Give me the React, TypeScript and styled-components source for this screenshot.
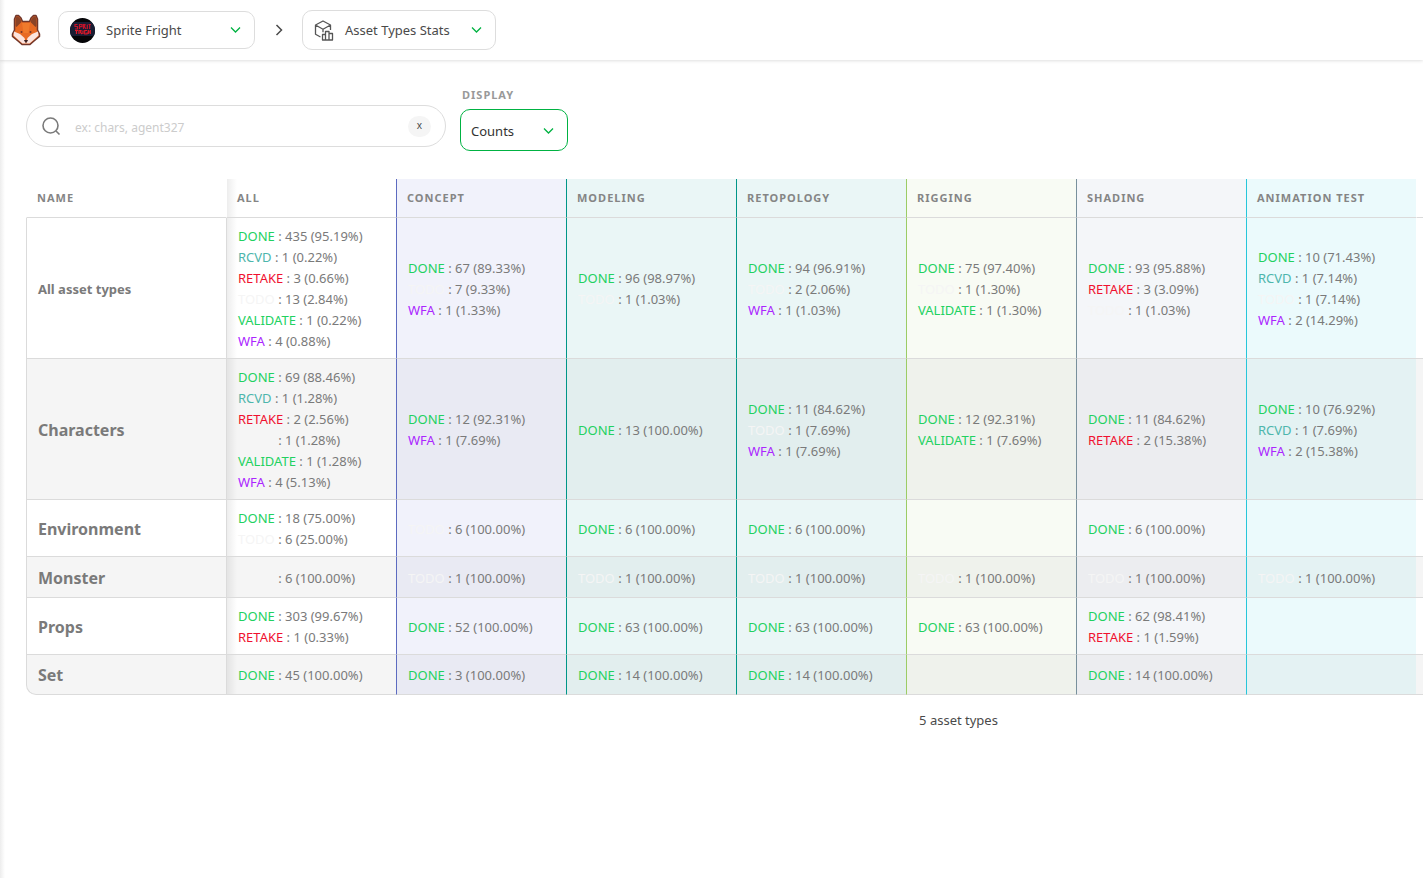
import React, { useId } from 'react';
import styled, { createGlobalStyle, css } from 'styled-components';

const GlobalStyle = createGlobalStyle`
  *, *::before, *::after { box-sizing: border-box; }
  body {
    margin: 0;
    background: #fff;
    color: #4a4a4a;
    font-family: 'Noto Sans', 'Open Sans', sans-serif;
    font-size: 13px;
  }
  button, input, select { font: inherit; color: inherit; }
`;

const Page = styled.div`
  min-height: 100vh;
  overflow: hidden;
  background: linear-gradient(to right, #ededed, #fff 5px);
`;

const TopBar = styled.header`
  display: flex;
  align-items: center;
  height: 60px;
  padding-left: 11px;
  box-shadow: 0 0 4px rgba(0, 0, 0, 0.2);
`;

const HomeLink = styled.a`
  display: flex;
  margin-right: 17px;
`;

const NavSelect = styled.button<{ $width: number; $height: number }>`
  display: flex;
  align-items: center;
  width: ${(p) => p.$width}px;
  height: ${(p) => p.$height}px;
  padding: 0 13px 0 11px;
  border: 1px solid #ddd;
  border-radius: 10px;
  background: #fff;
  cursor: pointer;
`;

const NavLabel = styled.span`
  flex: 1;
  margin-left: 11px;
  text-align: left;
  line-height: 20px;
`;

const NavIcon = styled.span`
  display: flex;
  flex: none;
`;

const Separator = styled.span`
  display: flex;
  justify-content: center;
  width: 47px;
`;

const Main = styled.main`
  padding: 25px 0 0 26px;
`;

const Filters = styled.form`
  display: flex;
  align-items: flex-end;
  gap: 14px;
  margin-bottom: 28px;
`;

const SearchBox = styled.div`
  display: flex;
  align-items: center;
  width: 420px;
  height: 42px;
  margin-bottom: 4px;
  padding: 0 14px;
  border: 1px solid #ddd;
  border-radius: 21px;
`;

const SearchInput = styled.input`
  flex: 1;
  min-width: 0;
  margin-left: 14px;
  padding: 3px 0 0;
  border: 0;
  outline: 0;
  background: none;
  font-size: 12px;
  &::placeholder { color: #ccc; opacity: 1; }
`;

const ClearButton = styled.button`
  width: 23px;
  height: 21px;
  padding: 0 0 2px;
  border: 0;
  border-radius: 11px;
  background: #f5f5f5;
  font-size: 10px;
  line-height: 18px;
`;

const Field = styled.div`
  display: flex;
  flex-direction: column;
`;

const FieldLabel = styled.label`
  padding: 0 0 5px 2px;
  color: #999;
  font-size: 11px;
  font-weight: 700;
  letter-spacing: 1px;
  line-height: 19px;
  text-transform: uppercase;
`;

const SelectFrame = styled.div`
  display: grid;
  align-items: center;
  width: 108px;
  height: 42px;
  & > * { grid-area: 1 / 1; }
  & > svg { justify-self: end; margin: 2px 14px 0 0; pointer-events: none; }
`;

const Select = styled.select`
  width: 100%;
  height: 100%;
  padding: 2px 10px 0;
  border: 1px solid #00b242;
  border-radius: 10px;
  background: #fff;
  color: #333;
  appearance: none;
`;

const TableScroller = styled.div`
  overflow-x: auto;
  scrollbar-width: none;
`;

const TableContent = styled.div`
  min-width: 1865px;
`;

const StatsTable = styled.table`
  width: 100%;
  border-collapse: separate;
  border-spacing: 0;
  table-layout: fixed;
  color: #7a7a7a;
`;

const edgeShadow = css`
  background-image: linear-gradient(to right, rgba(0, 0, 0, 0.07), rgba(0, 0, 0, 0) 10px);
  background-repeat: no-repeat;
`;

const NameCol = styled.col` width: 200px; `;
const StatCol = styled.col` width: 170px; `;

const HeadCell = styled.th<{ $bg?: string; $line?: string; $edge?: boolean }>`
  height: 39px;
  padding: 0 10px 2px;
  border-left: 1px solid ${(p) => p.$line ?? 'transparent'};
  border-bottom: 1px solid #dbdbdb;
  background-color: ${(p) => p.$bg ?? 'transparent'};
  color: #858585;
  font-size: 11px;
  font-weight: 700;
  letter-spacing: 1px;
  text-align: left;
  text-transform: uppercase;
  white-space: nowrap;
  ${(p) => p.$edge && edgeShadow}
`;

const Row = styled.tr`
  & > * { border-bottom: 1px solid #dbdbdb; }
  &:nth-child(even) { background: #f5f5f5; }
  &:last-child > th { border-bottom-left-radius: 10px; }
  &:last-child { background: none; }
  &:last-child > * { background-color: #f5f5f5; }
`;

const NameCell = styled.th<{ $total?: boolean }>`
  padding: 8px 11px 6px;
  border-left: 1px solid #dbdbdb;
  font-size: ${(p) => (p.$total ? 13 : 16)}px;
  font-weight: 700;
  line-height: ${(p) => (p.$total ? 21 : 26)}px;
  text-align: left;
  ${Row}:last-child > & { line-height: 25px; }
`;

const StatCell = styled.td<{ $bg?: string; $stripe?: string; $line?: string; $edge?: boolean }>`
  padding: 8px 11px 6px;
  border-left: 1px solid ${(p) => p.$line ?? '#dbdbdb'};
  line-height: 21px;
  white-space: nowrap;
  && { background-color: ${(p) => p.$bg ?? 'transparent'}; }
  ${Row}:nth-child(even) > && { background-color: ${(p) => p.$stripe ?? '#f5f5f5'}; }
  ${(p) => p.$edge && edgeShadow}
`;

const FillCell = styled.td``;

const Status = styled.span<{ $color: string }>`
  color: ${(p) => p.$color};
`;

const Footer = styled.p`
  margin: 15px 0 0;
  text-align: center;
  line-height: 20px;
`;

const STATUS_COLORS: Record<string, string> = {
  DONE: '#22d160',
  RCVD: '#4db6ac',
  RETAKE: '#f01030',
  TODO: '#f5f5f5',
  VALIDATE: '#22d160',
  WFA: '#ab26ff',
};

type Column = { name: string; line?: string; bg?: string; stripe?: string };

const COLUMNS: Column[] = [
  { name: 'All' },
  { name: 'Concept', line: '#5c6bc0', bg: '#f1f2fb', stripe: '#e9eaf3' },
  { name: 'Modeling', line: '#009688', bg: '#eaf6f6', stripe: '#e2eeee' },
  { name: 'Retopology', line: '#009688', bg: '#eaf6f6', stripe: '#e2eeee' },
  { name: 'Rigging', line: '#9ccc65', bg: '#f8fbf4', stripe: '#eff2ec' },
  { name: 'Shading', line: '#78909c', bg: '#f4f6f9', stripe: '#ecedf0' },
  { name: 'Animation Test', line: '#26c6da', bg: '#ebfafc', stripe: '#e4f2f3' },
];

type Stat = [status: string, count: number, percent: string];

const ROWS: { name: string; stats: Stat[][] }[] = [
  {
    name: 'All asset types',
    stats: [
      [['DONE', 435, '95.19'], ['RCVD', 1, '0.22'], ['RETAKE', 3, '0.66'], ['TODO', 13, '2.84'], ['VALIDATE', 1, '0.22'], ['WFA', 4, '0.88']],
      [['DONE', 67, '89.33'], ['TODO', 7, '9.33'], ['WFA', 1, '1.33']],
      [['DONE', 96, '98.97'], ['TODO', 1, '1.03']],
      [['DONE', 94, '96.91'], ['TODO', 2, '2.06'], ['WFA', 1, '1.03']],
      [['DONE', 75, '97.40'], ['TODO', 1, '1.30'], ['VALIDATE', 1, '1.30']],
      [['DONE', 93, '95.88'], ['RETAKE', 3, '3.09'], ['TODO', 1, '1.03']],
      [['DONE', 10, '71.43'], ['RCVD', 1, '7.14'], ['TODO', 1, '7.14'], ['WFA', 2, '14.29']],
    ],
  },
  {
    name: 'Characters',
    stats: [
      [['DONE', 69, '88.46'], ['RCVD', 1, '1.28'], ['RETAKE', 2, '2.56'], ['TODO', 1, '1.28'], ['VALIDATE', 1, '1.28'], ['WFA', 4, '5.13']],
      [['DONE', 12, '92.31'], ['WFA', 1, '7.69']],
      [['DONE', 13, '100.00']],
      [['DONE', 11, '84.62'], ['TODO', 1, '7.69'], ['WFA', 1, '7.69']],
      [['DONE', 12, '92.31'], ['VALIDATE', 1, '7.69']],
      [['DONE', 11, '84.62'], ['RETAKE', 2, '15.38']],
      [['DONE', 10, '76.92'], ['RCVD', 1, '7.69'], ['WFA', 2, '15.38']],
    ],
  },
  {
    name: 'Environment',
    stats: [
      [['DONE', 18, '75.00'], ['TODO', 6, '25.00']],
      [['TODO', 6, '100.00']],
      [['DONE', 6, '100.00']],
      [['DONE', 6, '100.00']],
      [],
      [['DONE', 6, '100.00']],
      [],
    ],
  },
  {
    name: 'Monster',
    stats: [
      [['TODO', 6, '100.00']],
      [['TODO', 1, '100.00']],
      [['TODO', 1, '100.00']],
      [['TODO', 1, '100.00']],
      [['TODO', 1, '100.00']],
      [['TODO', 1, '100.00']],
      [['TODO', 1, '100.00']],
    ],
  },
  {
    name: 'Props',
    stats: [
      [['DONE', 303, '99.67'], ['RETAKE', 1, '0.33']],
      [['DONE', 52, '100.00']],
      [['DONE', 63, '100.00']],
      [['DONE', 63, '100.00']],
      [['DONE', 63, '100.00']],
      [['DONE', 62, '98.41'], ['RETAKE', 1, '1.59']],
      [],
    ],
  },
  {
    name: 'Set',
    stats: [
      [['DONE', 45, '100.00']],
      [['DONE', 3, '100.00']],
      [['DONE', 14, '100.00']],
      [['DONE', 14, '100.00']],
      [],
      [['DONE', 14, '100.00']],
      [],
    ],
  },
];

const FoxLogo = () => (
  <svg width="30" height="32" viewBox="0 0 30 32" aria-hidden="true">
    <path d="M5 1.500h2.500L10 4l1.500 3.500h7L20 4l2.500-2.500H25L26.500 5v11l2 4v2.500L23 27l-4 3.500h-8L7 27l-5.500-4.500V20l2-4V5z" fill="#e86a24" stroke="#70362b" strokeWidth="1.500" strokeLinejoin="round" />
    <path d="M5.500 2.500H7L9.500 5l1 3-5 5-1-1V5zM24.500 2.500H23L20.500 5l-1 3 5 5 1-1V5z" fill="#8a4327" />
    <path d="M3 17.500l6 2.500 4.500 4 1.500 5.500h-3.500L8 26.500l-5.500-5zM27 17.500L21 20l-4.500 4-1.500 5.500h3.500l3.500-3 5.500-5z" fill="#fbe4df" />
    <path d="M11 9h8l-1.500 10h-5z" fill="#f07a2c" />
    <circle cx="10.500" cy="18" r="1" fill="#70362b" />
    <circle cx="19.500" cy="18" r="1" fill="#70362b" />
    <path d="M13.500 26.500h3L15 28.500z" fill="#3d2020" stroke="#3d2020" />
  </svg>
);

const ProjectAvatar = () => {
  const clip = useId();
  return (
    <svg width="25" height="25" viewBox="0 0 25 25" aria-hidden="true">
      <clipPath id={clip}><circle cx="12.500" cy="12.500" r="12.500" /></clipPath>
      <g clipPath={`url(#${clip})`}>
        <path d="M0 0h25v25H0z" fill="#050508" />
        <path d="M0 4h25v14H0z" fill="#191d33" />
        <path d="M7.500 6.500H5v2h2.500V11H5M9.500 11V6.500H12v2.200H9.500M13.500 11V6.500H15l-.5 2.300L16 11M17.300 6.500V11M18.500 6.500h2.500M19.700 6.500V11" fill="none" stroke="#c4142a" strokeWidth="1.200" />
        <path d="M5 12.500h3M6.500 12.500V16M9 16v-3.500h2l-.5 1.800L12 16M13 12.500V16M17 12.500h-2.300V16H17v-1.500M18.300 12v4M18.300 14h2M20.300 12v4" fill="none" stroke="#e01828" strokeWidth="1.200" />
      </g>
    </svg>
  );
};

const AssetStatsIcon = () => (
  <svg width="20" height="21" viewBox="0 0 20 21" fill="none" stroke="#555" strokeWidth="1.300" strokeLinejoin="round" aria-hidden="true">
    <path d="M6.500 17L1.500 14.300V5L9 1l7.500 4v5M1.500 5L9 9.200 16.500 5M9 9.200v3" />
    <path d="M8.500 14.500h3V20h-3zM11.500 11.500h3.500V20h-3.500zM15 13.500h3.500V20H15z" />
  </svg>
);

const ChevronDown = () => (
  <svg width="11" height="8" viewBox="0 0 11 8" fill="none" stroke="#00b242" strokeWidth="1.300" aria-hidden="true">
    <path d="M1 1.500l4.500 4.500L10 1.500" />
  </svg>
);

const ChevronRight = () => (
  <svg width="8" height="12" viewBox="0 0 8 12" fill="none" stroke="#4a4a4a" strokeWidth="1.500" aria-hidden="true">
    <path d="M1.500 1L6.500 6l-5 5" />
  </svg>
);

const SearchIcon = () => (
  <svg width="20" height="20" viewBox="0 0 20 20" fill="none" stroke="#7a7a7a" strokeWidth="1.600" aria-hidden="true">
    <circle cx="9.500" cy="9.500" r="7.500" />
    <path d="M15 15l3.500 3.500" />
  </svg>
);

export default function App() {
  return (
    <>
      <GlobalStyle />
      <Page>
        <TopBar>
          <HomeLink href="#" aria-label="Home"><FoxLogo /></HomeLink>
          <NavSelect type="button" $width={197} $height={38}>
            <NavIcon><ProjectAvatar /></NavIcon>
            <NavLabel>Sprite Fright</NavLabel>
            <ChevronDown />
          </NavSelect>
          <Separator><ChevronRight /></Separator>
          <NavSelect type="button" $width={194} $height={40}>
            <NavIcon><AssetStatsIcon /></NavIcon>
            <NavLabel>Asset Types Stats</NavLabel>
            <ChevronDown />
          </NavSelect>
        </TopBar>
        <Main>
          <Filters>
            <SearchBox>
              <SearchIcon />
              <SearchInput type="text" aria-label="Search asset types" placeholder="ex: chars, agent327" />
              <ClearButton type="button" aria-label="Clear search">x</ClearButton>
            </SearchBox>
            <Field>
              <FieldLabel htmlFor="display">Display</FieldLabel>
              <SelectFrame>
                <Select id="display" defaultValue="counts">
                  <option value="counts">Counts</option>
                </Select>
                <ChevronDown />
              </SelectFrame>
            </Field>
          </Filters>
          <TableScroller>
            <TableContent>
              <StatsTable>
                <colgroup>
                  <NameCol />
                  {COLUMNS.map((c) => <StatCol key={c.name} />)}
                  <col />
                </colgroup>
                <thead>
                  <tr>
                    <HeadCell scope="col">Name</HeadCell>
                    {COLUMNS.map((c, i) => (
                      <HeadCell key={c.name} scope="col" $bg={c.bg} $line={c.line} $edge={i === 0}>{c.name}</HeadCell>
                    ))}
                    <HeadCell as="td" />
                  </tr>
                </thead>
                <tbody>
                  {ROWS.map((row, r) => (
                    <Row key={row.name}>
                      <NameCell scope="row" $total={r === 0}>{row.name}</NameCell>
                      {row.stats.map((stats, i) => (
                        <StatCell key={COLUMNS[i].name} $bg={COLUMNS[i].bg} $stripe={COLUMNS[i].stripe} $line={COLUMNS[i].line} $edge={i === 0}>
                          {stats.map(([status, count, percent]) => (
                            <div key={status}>
                              <Status $color={STATUS_COLORS[status]}>{status}</Status> : {count} ({percent}%)
                            </div>
                          ))}
                        </StatCell>
                      ))}
                      <FillCell />
                    </Row>
                  ))}
                </tbody>
              </StatsTable>
              <Footer>5 asset types</Footer>
            </TableContent>
          </TableScroller>
        </Main>
      </Page>
    </>
  );
}
